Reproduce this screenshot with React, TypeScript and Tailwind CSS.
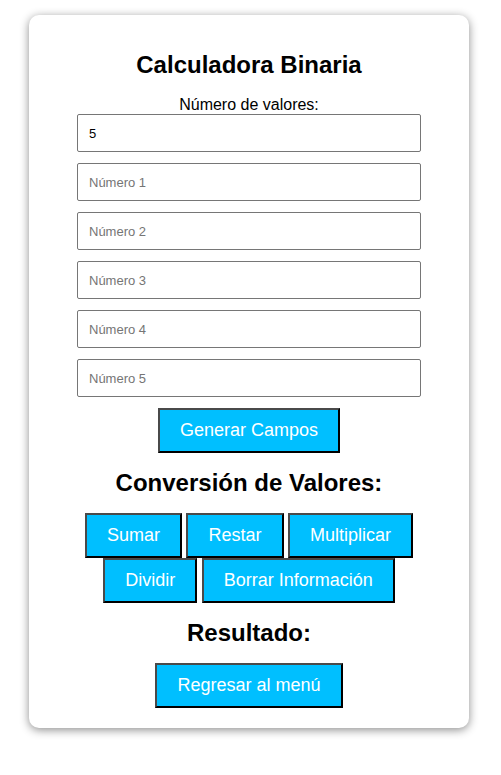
const btn =
  "h-[45px] px-[20px] bg-[#00bfff] text-white text-[18px] leading-[21px] border-2 border-solid border-t-[#4a4a4a] border-l-[#4a4a4a] border-r-black border-b-black"

export default function App() {
  const campos = ['Número 1', 'Número 2', 'Número 3', 'Número 4', 'Número 5']

  return (
    <div className="min-h-[775px] bg-white pt-[15px] font-['Liberation_Sans',Arial,sans-serif] text-black">
      {/* tarjeta principal */}
      <div className="ml-[29px] w-[440px] rounded-[10px] bg-white shadow-[0_2px_10px_rgba(0,0,0,0.45)] pt-[36px] pb-[20px] flex flex-col items-center">
        <h1 className="text-[24px] leading-[28px] font-bold">Calculadora Binaria</h1>

        <label className="mt-4 text-[16px] leading-[19px]">Número de valores:</label>
        <div className="flex flex-col gap-[11px]">
          <input
            defaultValue="5"
            className="w-[344px] h-[38px] px-[11px] text-[13px] border border-[#767676] rounded-[2px] outline-none"
          />
          {campos.map((c) => (
            <input
              key={c}
              placeholder={c}
              className="w-[344px] h-[38px] px-[11px] text-[13px] border border-[#767676] rounded-[2px] outline-none placeholder:text-[#757575]"
            />
          ))}
        </div>

        <button className={`mt-[11px] ${btn}`}>Generar Campos</button>

        <h2 className="mt-4 text-[24px] leading-[28px] font-bold">Conversión de Valores:</h2>

        <div className="mt-4 w-[400px] flex flex-wrap justify-center gap-x-[4.5px]">
          <button className={btn}>Sumar</button>
          <button className={btn}>Restar</button>
          <button className={btn}>Multiplicar</button>
          <button className={btn}>Dividir</button>
          <button className={btn}>Borrar Información</button>
        </div>

        <h2 className="mt-4 text-[24px] leading-[28px] font-bold">Resultado:</h2>

        <button className={`mt-4 ${btn}`}>Regresar al menú</button>
      </div>
    </div>
  )
}
